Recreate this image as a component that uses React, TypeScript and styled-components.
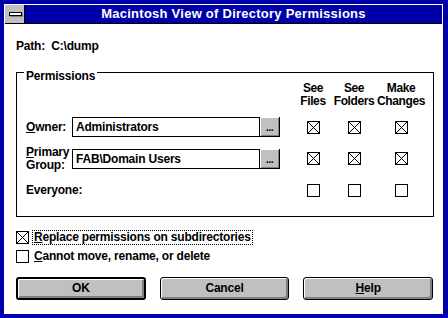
import React from 'react';
import styled, { createGlobalStyle } from 'styled-components';

const Global = createGlobalStyle`
  html, body { margin: 0; padding: 0; background: #fff; }
  body {
    font-family: "Liberation Sans", Arial, sans-serif;
    font-size: 12px;
    font-weight: bold;
    letter-spacing: -0.2px;
    color: #000;
  }
  * { box-sizing: border-box; }
`;

const Window = styled.div`
  width: 448px;
  height: 318px;
  border: 4px solid #0000a8;
  border-right-width: 5px;
  padding: 1px 1px 0 1px;
  background: #fff;
  display: flex;
  flex-direction: column;
`;

const TitleBar = styled.div`
  display: flex;
  height: 19px;
  background: #0000a8;
  border-bottom: 1px solid #000;
`;

const SysMenu = styled.div`
  width: 20px;
  background: #c0c0c0;
  border-right: 1px solid #000;
  display: flex;
  align-items: center;
  justify-content: center;
`;

const SysBar = styled.span`
  display: block;
  width: 13px;
  height: 4px;
  margin-left: 1px;
  border: 1px solid #000;
  background: #fff;
  box-shadow: 1px 1px 0 #808080;
`;

const Title = styled.div`
  flex: 1;
  text-align: center;
  color: #fff;
  font-size: 13px;
  line-height: 18px;
  letter-spacing: 0.25px;
`;

const Client = styled.div`
  flex: 1;
  display: flex;
  flex-direction: column;
  padding: 16px 9px 0 11px;
`;

const PathRow = styled.div`
  line-height: 13px;
  white-space: pre;
`;

const GroupBox = styled.div`
  margin-top: 19px;
  width: 418px;
  border: 1px solid #000;
  padding: 0 0 10px 9px;
`;

const Legend = styled.div`
  width: fit-content;
  margin: -3px 0 0 -2px;
  padding: 0 2px;
  background: #fff;
  line-height: 13px;
`;

const Grid = styled.div`
  margin-top: -1px;
  display: grid;
  grid-template-columns: 46px 208px 12px 42px 40px 54px;
  grid-template-rows: 29px 32px 31px 32px;
  align-items: center;
`;

const HeaderSpacer = styled.div`
  grid-column: span 3;
`;

const HeaderCell = styled.div`
  align-self: start;
  justify-self: center;
  text-align: center;
  line-height: 13px;
  letter-spacing: -0.4px;
  white-space: nowrap;
`;

const RowLabel = styled.div`
  line-height: 13px;
`;

const FieldGroup = styled.div`
  display: flex;
`;

const TextBox = styled.div`
  width: 188px;
  height: 20px;
  border: 1px solid #000;
  padding-left: 3px;
  line-height: 18px;
  background: #fff;
  white-space: nowrap;
`;

const BrowseButton = styled.div`
  width: 20px;
  height: 20px;
  background: #c0c0c0;
  border-right: 1px solid #000;
  border-bottom: 1px solid #000;
  box-shadow: inset 1px 1px 0 #fff, inset -1px -1px 0 #808080;
  text-align: center;
  line-height: 20px;
  font-size: 11px;
  letter-spacing: -0.5px;
  color: #000;
`;

const CellEmpty = styled.div``;

const CheckCell = styled.div`
  justify-self: center;
  display: flex;
`;

const Box = styled.span`
  display: block;
  width: 13px;
  height: 13px;
  border: 1px solid #000;
  background: #fff;
  flex: none;
`;

const Options = styled.div`
  margin-top: 13px;
  display: flex;
  flex-direction: column;
  gap: 4px;
`;

const OptionRow = styled.div`
  display: flex;
  align-items: center;
  height: 15px;
`;

const OptionLabel = styled.span<{ $focused?: boolean }>`
  margin-left: 3px;
  padding: 0 1px;
  line-height: 13px;
  border: 1px dotted ${(p) => (p.$focused ? '#000' : 'transparent')};
`;

const ButtonRow = styled.div`
  margin-top: 13px;
  display: flex;
  gap: 14px;
`;

const PushButton = styled.div<{ $default?: boolean }>`
  width: 130px;
  height: 23px;
  border: ${(p) => (p.$default ? '2px' : '1px')} solid #000;
  border-radius: 3px;
  background: #c0c0c0;
  box-shadow: inset 1px 1px 0 #fff, inset -2px -2px 0 #808080;
  display: flex;
  align-items: center;
  justify-content: center;
  padding-bottom: 1px;
  line-height: 13px;
`;

function Check({ checked }: { checked?: boolean }) {
  return (
    <Box>
      {checked && (
        <svg width="11" height="11" viewBox="0 0 11 11" style={{ display: 'block' }}>
          <path d="M0 0L11 11M11 0L0 11" stroke="#000" strokeWidth="1" fill="none" />
        </svg>
      )}
    </Box>
  );
}

export default function App() {
  return (
    <>
      <Global />
      <Window>
        <TitleBar>
          <SysMenu>
            <SysBar />
          </SysMenu>
          <Title>Macintosh View of Directory Permissions</Title>
        </TitleBar>
        <Client>
          <PathRow>{'Path:  C:\\dump'}</PathRow>
          <GroupBox>
            <Legend>Permissions</Legend>
            <Grid>
              <HeaderSpacer />
              <HeaderCell>See<br />Files</HeaderCell>
              <HeaderCell>See<br />Folders</HeaderCell>
              <HeaderCell>Make<br />Changes</HeaderCell>

              <RowLabel><u>O</u>wner:</RowLabel>
              <FieldGroup>
                <TextBox>Administrators</TextBox>
                <BrowseButton>...</BrowseButton>
              </FieldGroup>
              <CellEmpty />
              <CheckCell><Check checked /></CheckCell>
              <CheckCell><Check checked /></CheckCell>
              <CheckCell><Check checked /></CheckCell>

              <RowLabel><u>P</u>rimary<br />Group:</RowLabel>
              <FieldGroup>
                <TextBox>FAB\Domain Users</TextBox>
                <BrowseButton>...</BrowseButton>
              </FieldGroup>
              <CellEmpty />
              <CheckCell><Check checked /></CheckCell>
              <CheckCell><Check checked /></CheckCell>
              <CheckCell><Check checked /></CheckCell>

              <RowLabel>Everyone:</RowLabel>
              <CellEmpty />
              <CellEmpty />
              <CheckCell><Check /></CheckCell>
              <CheckCell><Check /></CheckCell>
              <CheckCell><Check /></CheckCell>
            </Grid>
          </GroupBox>
          <Options>
            <OptionRow>
              <Check checked />
              <OptionLabel $focused><u>R</u>eplace permissions on subdirectories</OptionLabel>
            </OptionRow>
            <OptionRow>
              <Check />
              <OptionLabel><u>C</u>annot move, rename, or delete</OptionLabel>
            </OptionRow>
          </Options>
          <ButtonRow>
            <PushButton $default>OK</PushButton>
            <PushButton>Cancel</PushButton>
            <PushButton><span><u>H</u>elp</span></PushButton>
          </ButtonRow>
        </Client>
      </Window>
    </>
  );
}
